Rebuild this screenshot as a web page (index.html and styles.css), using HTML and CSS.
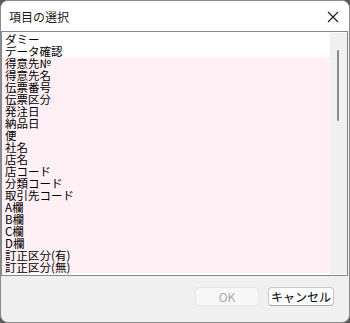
FILE: index.html
```html
<!DOCTYPE html>
<html lang="ja">
<head>
  <meta charset="UTF-8">
  <title>項目の選択</title>
  <link rel="stylesheet" href="styles.css">
</head>
<body>

  <div class="window">
    <div class="titlebar">
      <span class="title">項目の選択</span>
      <span class="close">
        <svg width="12" height="12" viewBox="0 0 12 12">
          <path d="M1 1 L11 11 M11 1 L1 11" stroke="#1a1a1a" stroke-width="1.1" fill="none"/>
        </svg>
      </span>
    </div>

    <div class="listbox">
      <div class="items">
        <div class="item">ダミー</div>
        <div class="item">データ確認</div>
        <div class="item marked">得意先№</div>
        <div class="item marked">得意先名</div>
        <div class="item marked">伝票番号</div>
        <div class="item marked">伝票区分</div>
        <div class="item marked">発注日</div>
        <div class="item marked">納品日</div>
        <div class="item marked">便</div>
        <div class="item marked">社名</div>
        <div class="item marked">店名</div>
        <div class="item marked">店コード</div>
        <div class="item marked">分類コード</div>
        <div class="item marked">取引先コード</div>
        <div class="item marked">A欄</div>
        <div class="item marked">B欄</div>
        <div class="item marked">C欄</div>
        <div class="item marked">D欄</div>
        <div class="item marked">訂正区分(有)</div>
        <div class="item marked">訂正区分(無)</div>
      </div>
      <div class="scrollbar">
        <div class="thumb"></div>
      </div>
    </div>

    <div class="footer">
      <button class="btn" disabled>OK</button>
      <button class="btn">キャンセル</button>
    </div>
  </div>

</body>
</html>
```

FILE: styles.css
```css
body {
  margin: 0;
  background: #5a5a5a;
  font-family: "Noto Sans CJK JP", "Noto Sans", sans-serif;
  font-size: 12px;
  color: #000;
}

.window {
  width: 350px;
  height: 323px;
  box-sizing: border-box;
  border: 1px solid #8c8c8c;
  border-radius: 8px;
  background: #f0f0f0;
  overflow: hidden;
  display: flex;
  flex-direction: column;
}

.titlebar {
  height: 30px;
  flex-shrink: 0;
  background: #fff;
  display: flex;
  align-items: center;
  justify-content: space-between;
  padding: 0 10px 0 8px;
}

.title {
  font-size: 12px;
  color: #1a1a1a;
}

.close {
  display: flex;
  margin-top: 1px;
}

.listbox {
  height: 245px;
  box-sizing: border-box;
  margin-right: 1px;
  border: 1px solid #828790;
  background: #fff;
  display: flex;
  flex-shrink: 0;
}

.items {
  flex: 1;
  padding-top: 1px;
  overflow: hidden;
}

.item {
  height: 12px;
  line-height: 12px;
  font-size: 11.5px;
  padding-left: 3px;
  white-space: nowrap;
}

.item.marked {
  background: #fff0f5;
}

.scrollbar {
  width: 17px;
  margin: 1px 0;
  background: #f0f0f0;
}

.thumb {
  width: 2px;
  height: 71px;
  margin: 17px 0 0 7px;
  border-radius: 1px;
  background: #8b8b8b;
}

.footer {
  display: flex;
  justify-content: flex-end;
  gap: 9px;
  padding: 11px 15px 0 0;
}

.btn {
  height: 19px;
  padding: 0;
  border: 1px solid #c8c8c8;
  border-bottom-color: #a8a8a8;
  border-radius: 4px;
  background: #fdfdfd;
  font-family: "Noto Sans CJK JP", "Noto Sans", sans-serif;
  font-size: 12px;
  line-height: 16px;
  color: #000;
  width: 66px;
}

.btn:disabled {
  width: 64px;
  border-color: #e6e6e6;
  background: #f7f7f7;
  color: #a8a8a8;
}
```
